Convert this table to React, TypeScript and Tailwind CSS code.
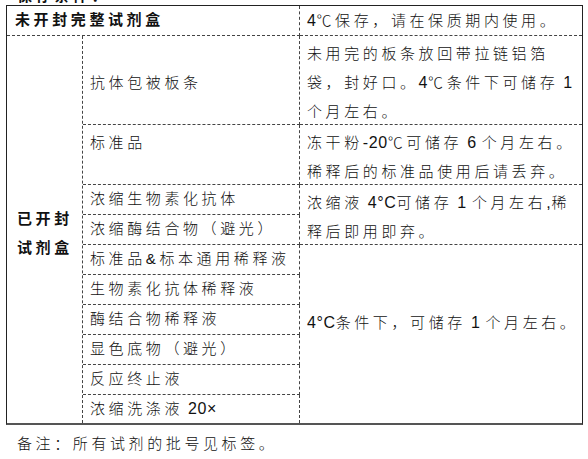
import React from "react";

const F = "[font-family:'Liberation_Sans','Noto_Sans_CJK_SC',sans-serif]";

function L({ children }: { children: React.ReactNode }) {
  return <span className="text-[16px] tracking-[0.6px] font-normal">{children}</span>;
}

export default function App() {
  const cellB = "border-b border-dashed border-[#444]";
  const cellR = "border-r border-dashed border-[#444]";
  const c2 = `${cellB} ${cellR} flex items-center pl-[7px] whitespace-nowrap`;
  return (
    <div className={`w-[588px] h-[459px] bg-white text-[#111] text-[15px] tracking-[3.6px] font-light ${F}`}>
      <div className="h-[5px] overflow-hidden pl-[17px]">
        <div className="mt-[-14px] leading-[20px] font-bold">保存条件：</div>
      </div>
      <div className="ml-[6px] w-[577px] border border-[#222] border-b-2 border-b-[#555] grid grid-cols-[76px_217px_282px] grid-rows-[30px_89px_60px_30px_30px_30px_30px_30px_30px_30px_28px]">
        {/* header */}
        <div className={`col-span-2 ${cellB} ${cellR} flex items-center pl-[8px] font-bold`}>未开封完整试剂盒</div>
        <div className={`${cellB} flex items-center pl-[7px] whitespace-nowrap`}>
          <span><L>4</L>℃保存，请在保质期内使用。</span>
        </div>

        {/* left merged */}
        <div className={`row-span-10 ${cellR} flex flex-col justify-center pl-[10px] pt-[6px] font-bold leading-[29px]`}>
          <div>已开封</div>
          <div>试剂盒</div>
        </div>

        {/* row 2 */}
        <div className={`${c2} pt-[7px]`}>抗体包被板条</div>
        <div className={`${cellB} pl-[7px] pt-[3px] leading-[29px] whitespace-nowrap`}>
          <div>未用完的板条放回带拉链铝箔</div>
          <div>袋，封好口。<L>4</L>℃条件下可储存<L> 1</L></div>
          <div>个月左右。</div>
        </div>

        {/* row 3 */}
        <div className={`${cellB} ${cellR} pl-[7px] pt-[3px] leading-[29px] whitespace-nowrap`}>标准品</div>
        <div className={`${cellB} pl-[7px] pt-[3px] leading-[29px] whitespace-nowrap`}>
          <div>冻干粉<L>-20</L>℃可储存<L> 6 </L>个月左右。</div>
          <div>稀释后的标准品使用后请丢弃。</div>
        </div>

        {/* row 4 */}
        <div className={c2}>浓缩生物素化抗体</div>
        <div className={`row-span-2 ${cellB} pl-[7px] pt-[3px] leading-[29px] whitespace-nowrap`}>
          <div>浓缩液<L> 4°C</L>可储存<L> 1 </L>个月左右<L>,</L>稀</div>
          <div>释后即用即弃。</div>
        </div>

        {/* row 5 */}
        <div className={c2}>浓缩酶结合物（避光）</div>

        {/* rows 6-11 */}
        <div className={c2}>标准品&amp;标本通用稀释液</div>
        <div className="row-span-6 flex items-center pl-[7px] pb-[23px] whitespace-nowrap">
          <span><L>4°C</L>条件下，可储存<L> 1 </L>个月左右。</span>
        </div>
        <div className={c2}>生物素化抗体稀释液</div>
        <div className={c2}>酶结合物稀释液</div>
        <div className={c2}>显色底物（避光）</div>
        <div className={c2}>反应终止液</div>
        <div className={`${cellR} flex items-center pl-[7px] whitespace-nowrap`}>
          <span>浓缩洗涤液<L> 20×</L></span>
        </div>
      </div>
      <div className="pl-[17px] pt-[4px] leading-[30px]">备注：所有试剂的批号见标签。</div>
    </div>
  );
}
